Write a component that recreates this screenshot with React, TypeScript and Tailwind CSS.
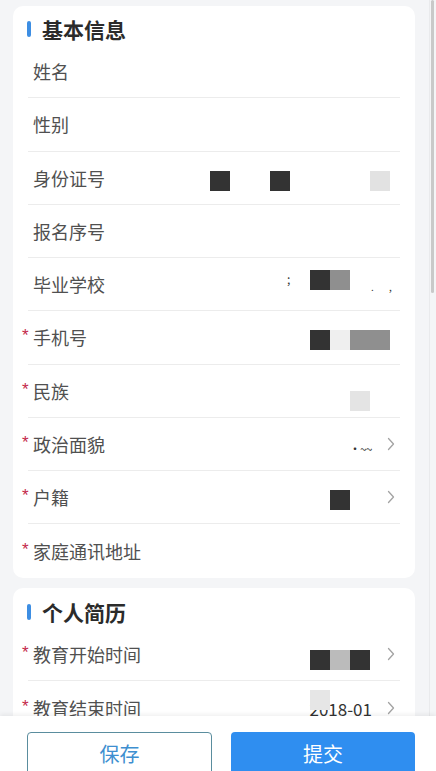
import React from 'react';

// simple chevron used on picker rows
const Chevron: React.FC = () => (
  <svg width="8" height="14" viewBox="0 0 8 14" className="shrink-0">
    <polyline points="1.5,1.5 6.5,7 1.5,12.5" fill="none" stroke="#a3a3a3" strokeWidth="1.3" strokeLinecap="round" strokeLinejoin="round" />
  </svg>
);

// a cell of the privacy mosaic laid over the value column
const Blk: React.FC<{ c: string }> = ({ c }) => <div className={`absolute h-[20px] ${c}`} />;

interface RowProps {
  label: string;
  required?: boolean;
  arrow?: boolean;
  last?: boolean;
  h?: string;
  children?: React.ReactNode;
}

const Row: React.FC<RowProps> = ({ label, required, arrow, last, h = 'h-[53.25px]', children }) => (
  <div className={`relative mx-[15px] flex items-center justify-between px-[5px] ${h} ${last ? '' : 'border-b border-[#ececec]'}`}>
    <div className="relative text-[18px] leading-none text-[#505050]">
      {required && (
        <span
          className="absolute -left-[11px] -top-[1px] text-[17px] leading-none text-[#c4284a]"
          style={{ fontFamily: '"Liberation Sans", sans-serif' }}
        >
          *
        </span>
      )}
      {label}
    </div>
    {arrow && <Chevron />}
    {children}
  </div>
);

const Title: React.FC<{ text: string; h: string }> = ({ text, h }) => (
  <div className={`flex items-center gap-[11px] pl-[14px] ${h}`}>
    <span className="h-[16px] w-[4px] rounded-full bg-[#3d8ee3]" />
    <span className="text-[21px] font-bold leading-none text-[#2b2b2b]">{text}</span>
  </div>
);

export default function App() {
  return (
    <div
      className="relative h-[771px] w-full overflow-hidden bg-[#f4f5f7]"
      style={{ fontFamily: '"Noto Sans CJK SC", "Noto Sans", sans-serif' }}
    >
      {/* scrollbar */}
      <div className="absolute right-[6px] top-0 h-full w-px bg-[#e9eaec]" />
      <div className="absolute right-[2px] top-0 h-[293px] w-[3px] rounded-full bg-[#c9c9c9]" />

      <div className="flex w-[402px] flex-col gap-[10px] pl-[13px] pt-[6px] box-content">
        {/* 基本信息 */}
        <div className="rounded-[10px] bg-white">
          <Title text="基本信息" h="h-[39px] pt-[7px]" />
          <Row label="姓名" />
          <Row label="性别" />
          <Row label="身份证号">
            <Blk c="left-[182px] top-[19px] w-[20px] bg-[#333]" />
            <Blk c="left-[242px] top-[19px] w-[20px] bg-[#333]" />
            <Blk c="left-[342px] top-[19px] w-[20px] bg-[#e2e2e2]" />
          </Row>
          <Row label="报名序号" />
          <Row label="毕业学校">
            <span className="absolute left-[259px] top-[15px] text-[12px] leading-none text-[#333]">;</span>
            <Blk c="left-[282px] top-[12px] w-[20px] bg-[#333]" />
            <Blk c="left-[302px] top-[12px] w-[20px] bg-[#8f8f8f]" />
            <span className="absolute left-[343px] top-[24px] text-[10px] leading-none text-[#333]">.</span>
            <span className="absolute left-[361px] top-[24px] text-[10px] leading-none text-[#333]">,</span>
          </Row>
          <Row label="手机号" required>
            <Blk c="left-[282px] top-[19px] w-[20px] bg-[#333]" />
            <Blk c="left-[302px] top-[19px] w-[20px] bg-[#efefef]" />
            <Blk c="left-[322px] top-[19px] w-[40px] bg-[#8f8f8f]" />
          </Row>
          <Row label="民族" required>
            <Blk c="left-[322px] top-[26px] w-[20px] bg-[#e4e4e4]" />
          </Row>
          <Row label="政治面貌" required arrow>
            <span className="absolute left-[321px] top-[25px] text-[12px] leading-none tracking-[-1px] text-[#333]">·~~</span>
          </Row>
          <Row label="户籍" required arrow>
            <Blk c="left-[302px] top-[19px] w-[20px] bg-[#333]" />
          </Row>
          <Row label="家庭通讯地址" required last h="h-[54px]" />
        </div>

        {/* 个人简历 */}
        <div className="rounded-[10px] bg-white">
          <Title text="个人简历" h="h-[40px] pt-[8px]" />
          <Row label="教育开始时间" required arrow h="h-[53px]">
            <Blk c="left-[282px] top-[22px] w-[20px] bg-[#333]" />
            <Blk c="left-[302px] top-[22px] w-[20px] bg-[#bbbbbb]" />
            <Blk c="left-[322px] top-[22px] w-[20px] bg-[#333]" />
          </Row>
          <Row label="教育结束时间" required arrow last h="h-[53px]">
            <span className="absolute right-[28px] top-[19px] text-[17px] leading-none text-[#333]">2018-01</span>
            <Blk c="left-[282px] top-[9px] w-[20px] bg-[#e6e6e6]" />
          </Row>
        </div>
      </div>

      {/* bottom action bar */}
      <div className="absolute bottom-0 left-0 flex h-[55px] w-full gap-[19px] bg-white pl-[27px] pt-[16px] shadow-[0_-2px_4px_rgba(0,0,0,0.06)]">
        <button className="flex h-[44px] w-[185px] items-center justify-center rounded-[4px] border border-[#5a8d9e] text-[20px] text-[#3e8fd0]">
          保存
        </button>
        <button className="flex h-[44px] w-[184px] items-center justify-center rounded-[4px] bg-[#2f8ef0] text-[20px] text-white">
          提交
        </button>
      </div>
    </div>
  );
}
